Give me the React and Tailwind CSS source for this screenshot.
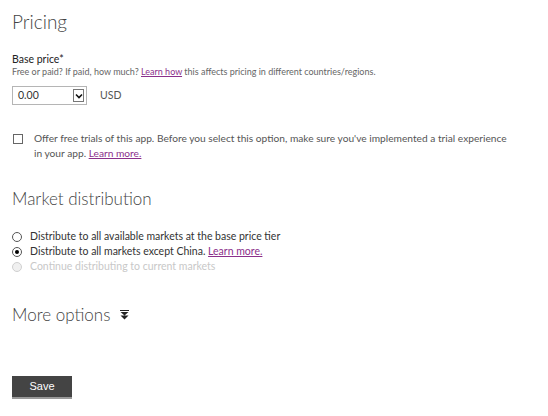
import React, { useState } from 'react';

const font = { fontFamily: 'Lato, "Open Sans", sans-serif' };

function Radio({ checked, disabled, children }) {
  return (
    <label className={`flex items-center gap-[8px] h-[15px] ${disabled ? 'text-[#c8c8c8]' : 'text-[#333]'}`}>
      <span className={`w-[10px] h-[10px] rounded-full border flex items-center justify-center ${disabled ? 'border-[#d0d0d0] bg-[#f0f0f0]' : 'border-[#555] bg-white'}`}>
        {checked && <span className="w-[4px] h-[4px] rounded-full bg-black" />}
      </span>
      <span>{children}</span>
    </label>
  );
}

export default function App() {
  const [trial, setTrial] = useState(false);
  return (
    <div className="w-[548px] h-[416px] bg-white px-[12px] pt-[9px] text-[#333]" style={font}>
      <h1 className="text-[19px] font-light text-[#444] leading-[26px]">Pricing</h1>

      <div className="mt-[18px] text-[10.5px] leading-[13px] text-[#222]">Base price*</div>
      <div className="text-[9px] leading-[12px] text-[#666]">
        Free or paid? If paid, how much? <a className="text-[#8b2f8b] underline">Learn how</a> this affects pricing in different countries/regions.
      </div>
      <div className="mt-[8px] flex items-center gap-[13px]">
        <div className="w-[75px] h-[19px] border border-[#b5b5b5] flex items-center justify-between pl-[5px] pr-[2px] text-[10.5px] text-[#333]">
          <span>0.00</span>
          <span className="w-[11px] h-[13px] border border-[#777] flex items-center justify-center bg-white">
            <svg width="8" height="6" viewBox="0 0 8 6"><path d="M1 1.5 L4 4.5 L7 1.5" stroke="#111" strokeWidth="1.6" fill="none" /></svg>
          </span>
        </div>
        <span className="text-[10.5px] text-[#555]">USD</span>
      </div>

      <div className="mt-[26px] flex gap-[11px]">
        <button onClick={() => setTrial(!trial)} className="mt-[3px] ml-[1px] w-[10px] h-[10px] border border-[#666] bg-white shrink-0" />
        <p className="w-[475px] text-[10.2px] leading-[15px] text-[#555]">
          Offer free trials of this app. Before you select this option, make sure you've implemented a trial experience in your app. <a className="text-[#8b2f8b] underline">Learn more.</a>
        </p>
      </div>

      <h2 className="mt-[26px] text-[17px] font-light text-[#444] leading-[24px]">Market distribution</h2>
      <div className="mt-[18px] text-[10.5px] flex flex-col">
        <Radio>Distribute to all available markets at the base price tier</Radio>
        <Radio checked>Distribute to all markets except China. <a className="text-[#8b2f8b] underline">Learn more.</a></Radio>
        <Radio disabled>Continue distributing to current markets</Radio>
      </div>

      <div className="mt-[29px] flex items-center gap-[10px]">
        <h2 className="text-[17px] font-light text-[#444] leading-[24px]">More options</h2>
        <svg width="9" height="10" viewBox="0 0 9 10"><path d="M0 0 H9 V1 H0Z M0.5 2 H8.5 L4.5 5.5Z M0.5 5.5 H8.5 L4.5 9.5Z" fill="#222" /></svg>
      </div>

      <button className="mt-[49px] w-[60px] h-[23px] bg-[#444] border-b-2 border-[#999] text-white text-[11px]" style={{ fontFamily: '"Liberation Sans", Arial, sans-serif' }}>Save</button>
    </div>
  );
}
